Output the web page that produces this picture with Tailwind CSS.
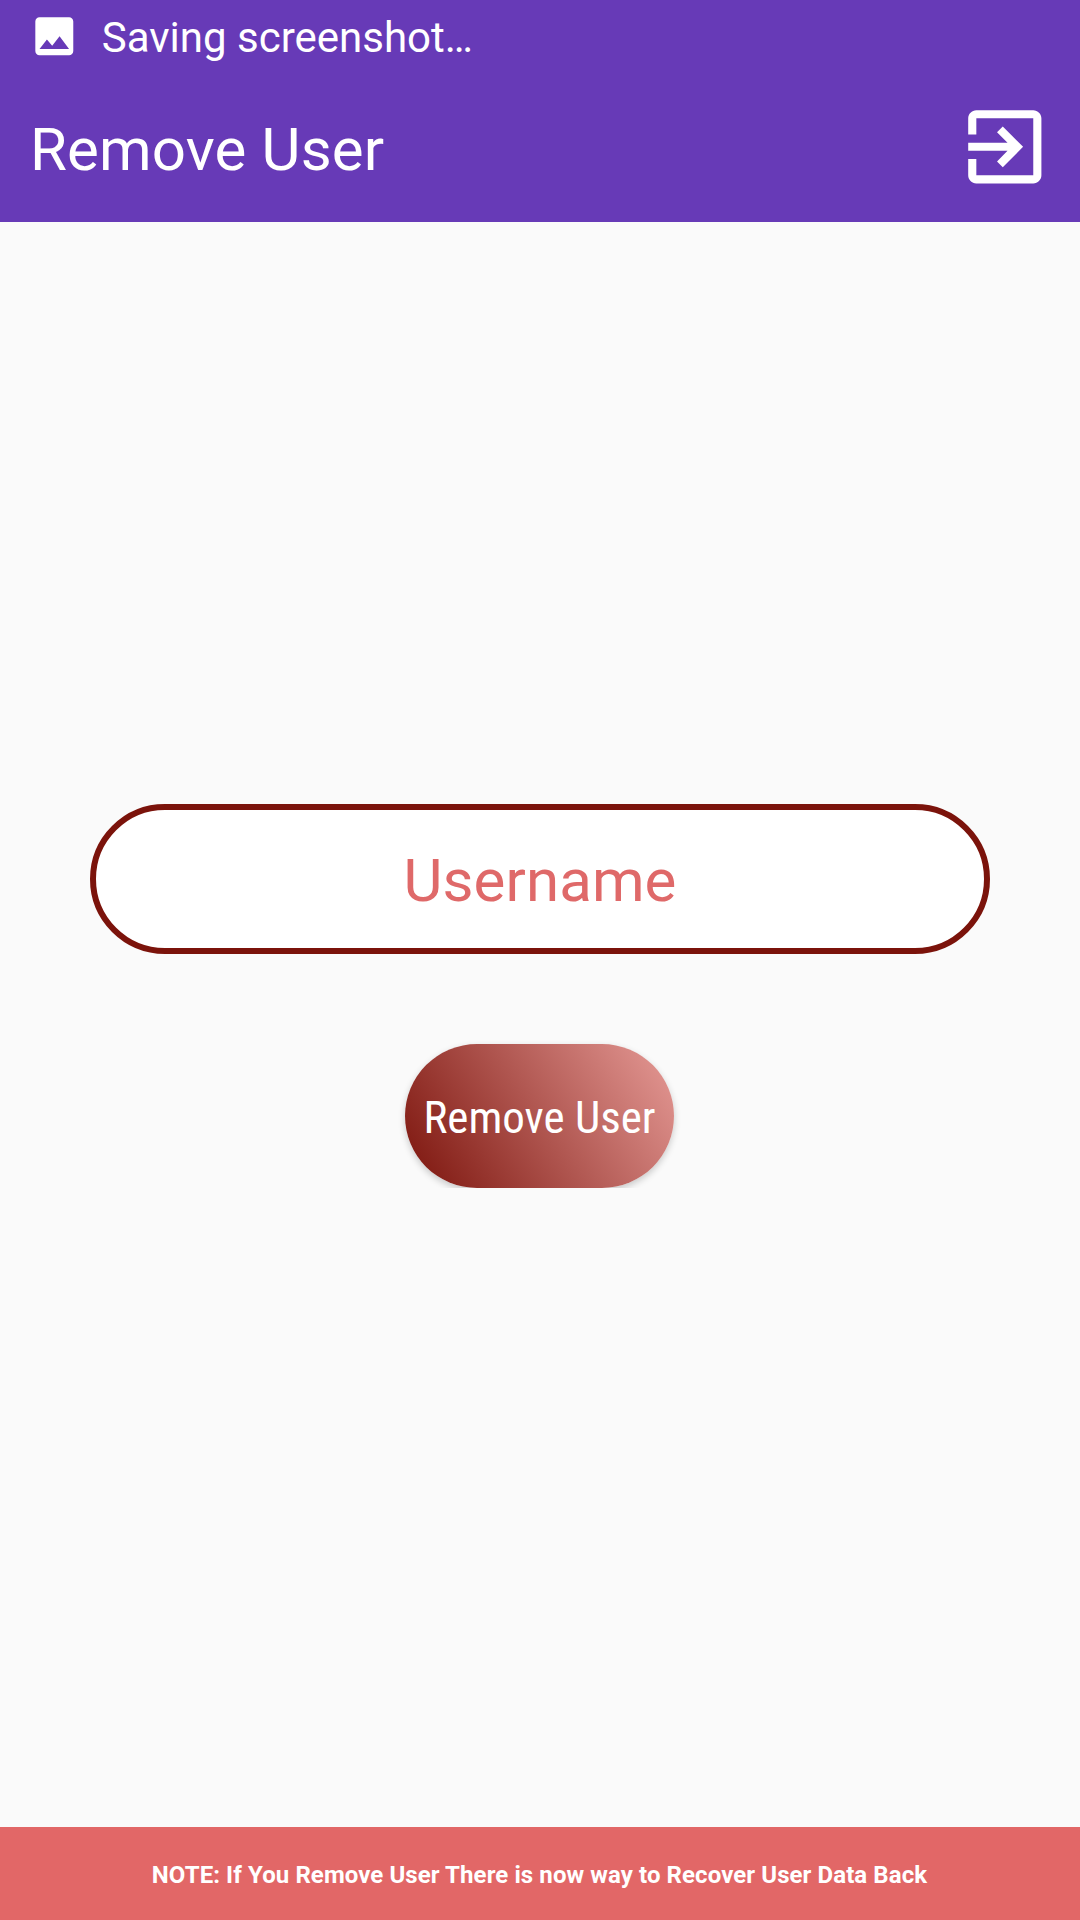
<!DOCTYPE html>
<html lang="en">
<head>
<meta charset="utf-8">
<title>Remove User</title>
<script src="https://cdn.jsdelivr.net/npm/@tailwindcss/browser@4"></script>
</head>
<body class="bg-[#fafafa] font-['Roboto',sans-serif]">
<div class="flex h-[1920px] w-[1080px] flex-col overflow-hidden">
  <header class="flex h-[222px] flex-col bg-[#673ab7] text-white">
    <div class="flex h-[75px] items-center pl-[28.7px]">
      <svg class="mb-[3px] size-[50.6px] shrink-0" viewBox="0 0 24 24" fill="currentColor"><path d="M21 19V5c0-1.1-.9-2-2-2H5c-1.1 0-2 .9-2 2v14c0 1.1.9 2 2 2h14c1.1 0 2-.9 2-2zM8.5 13.5l2.5 3.01L14.5 12l4.5 6H5l3.5-4.5z"/></svg>
      <span class="ml-[22.5px] text-[42px] leading-[50px] whitespace-nowrap">Saving screenshot…</span>
    </div>
    <div class="flex h-[147px] items-center justify-between pr-[26px] pl-[30px]">
      <h1 class="pt-[2px] text-[60px] leading-[70px] tracking-[0.15px]">Remove User</h1>
      <svg class="mb-[3.4px] size-[97.6px]" viewBox="0 0 24 24" fill="currentColor"><path d="M10.09 15.59L11.5 17l5-5-5-5-1.41 1.41L12.67 11H3v2h9.67l-2.58 2.59zM19 3H5c-1.11 0-2 .9-2 2v4h2V5h14v14H5v-4H3v4c0 1.1.89 2 2 2h14c1.1 0 2-.9 2-2V5c0-1.1-.9-2-2-2z"/></svg>
    </div>
  </header>
  <main class="flex flex-1 flex-col items-center pt-[582px]">
    <div class="flex h-[150px] w-[900px] items-center justify-center rounded-full border-6 border-[#7b130b] bg-white pt-[4px] text-[60px] leading-[70px] tracking-[0.1px] text-[#df6969]">Username</div>
    <div class="mt-[78px] mr-px flex w-[301px] justify-center overflow-hidden pt-3">
      <button class="flex h-[144px] w-[269px] items-center justify-center rounded-full bg-linear-[58deg] from-[#7b130b] to-[#e69b97] pt-[3px] text-white shadow-[0_3px_7px_rgba(0,0,0,0.2)]">
        <span class="text-[45px] leading-[54px] whitespace-nowrap font-['Roboto_Condensed','Roboto',sans-serif] [font-stretch:75%]">Remove User</span>
      </button>
    </div>
  </main>
  <footer class="flex h-[93px] items-center justify-center bg-[#e26767] pt-[2px] pr-px text-2xl font-bold tracking-[0.09px] text-white">NOTE: If You Remove User There is now way to Recover User Data Back</footer>
</div>
</body>
</html>
